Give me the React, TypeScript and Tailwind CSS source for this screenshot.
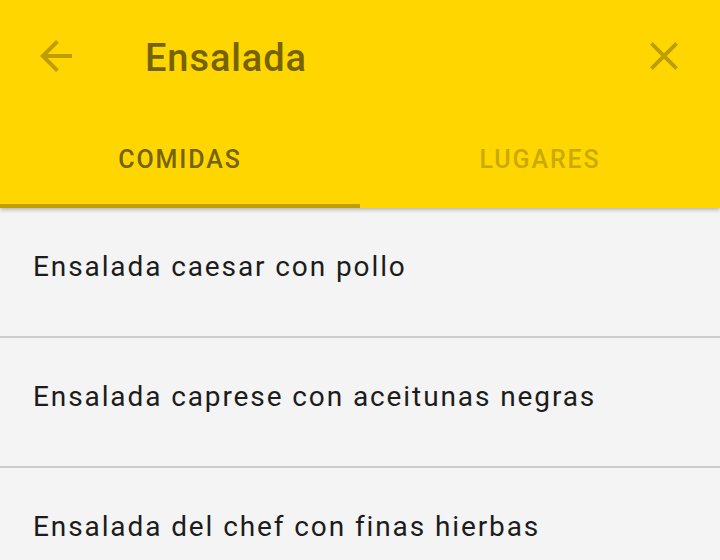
import React from "react";

export default function App() {
  const items = [
    "Ensalada caesar con pollo",
    "Ensalada caprese con aceitunas negras",
    "Ensalada del chef con finas hierbas",
  ];
  return (
    <div
      className="w-[720px] h-[560px] overflow-hidden bg-[#f4f4f4] flex flex-col"
      style={{ fontFamily: "Roboto, 'Noto Sans', sans-serif" }}
    >
      <div className="relative z-10 bg-[#ffd600] shadow-[0_2px_4px_rgba(0,0,0,0.25)] shrink-0">
        <div className="h-[112px] flex items-center">
          <div className="w-[48px] h-[48px] ml-[32px] flex items-center justify-center">
            <svg width="48" height="48" viewBox="0 0 24 24">
              <path
                d="M20 11H7.83l5.59-5.59L12 4l-8 8 8 8 1.41-1.41L7.83 13H20v-2z"
                fill="#bd9e00"
              />
            </svg>
          </div>
          <div className="ml-[65px] pt-[4px] text-[38px] font-medium text-[#756200] leading-none tracking-[0.9px]">
            Ensalada
          </div>
          <div className="flex-1" />
          <div className="w-[48px] h-[48px] mr-[32px] flex items-center justify-center">
            <svg width="48" height="48" viewBox="0 0 24 24">
              <path
                d="M19 6.41 17.59 5 12 10.59 6.41 5 5 6.41 10.59 12 5 17.59 6.41 19 12 13.41 17.59 19 19 17.59 13.41 12z"
                fill="#bd9e00"
              />
            </svg>
          </div>
        </div>
        <div className="h-[96px] flex">
          <div className="flex-1 relative flex items-center justify-center text-[25px] font-medium text-[#756200] tracking-[1.9px]">
            COMIDAS
            <div className="absolute left-0 right-0 bottom-0 h-[4px] bg-[#bd9e00]" />
          </div>
          <div className="flex-1 flex items-center justify-center text-[25px] font-medium text-[#c9aa00] tracking-[1.9px]">
            LUGARES
          </div>
        </div>
      </div>
      <div className="flex flex-col">
        {items.map((t) => (
          <div
            key={t}
            className="h-[130px] border-b-2 border-[#cccccc] pl-[33px] pt-[45px] shrink-0"
          >
            <div className="text-[28px] leading-[28px] text-[#1c1c1c] tracking-[1.9px]">{t}</div>
          </div>
        ))}
      </div>
    </div>
  );
}
